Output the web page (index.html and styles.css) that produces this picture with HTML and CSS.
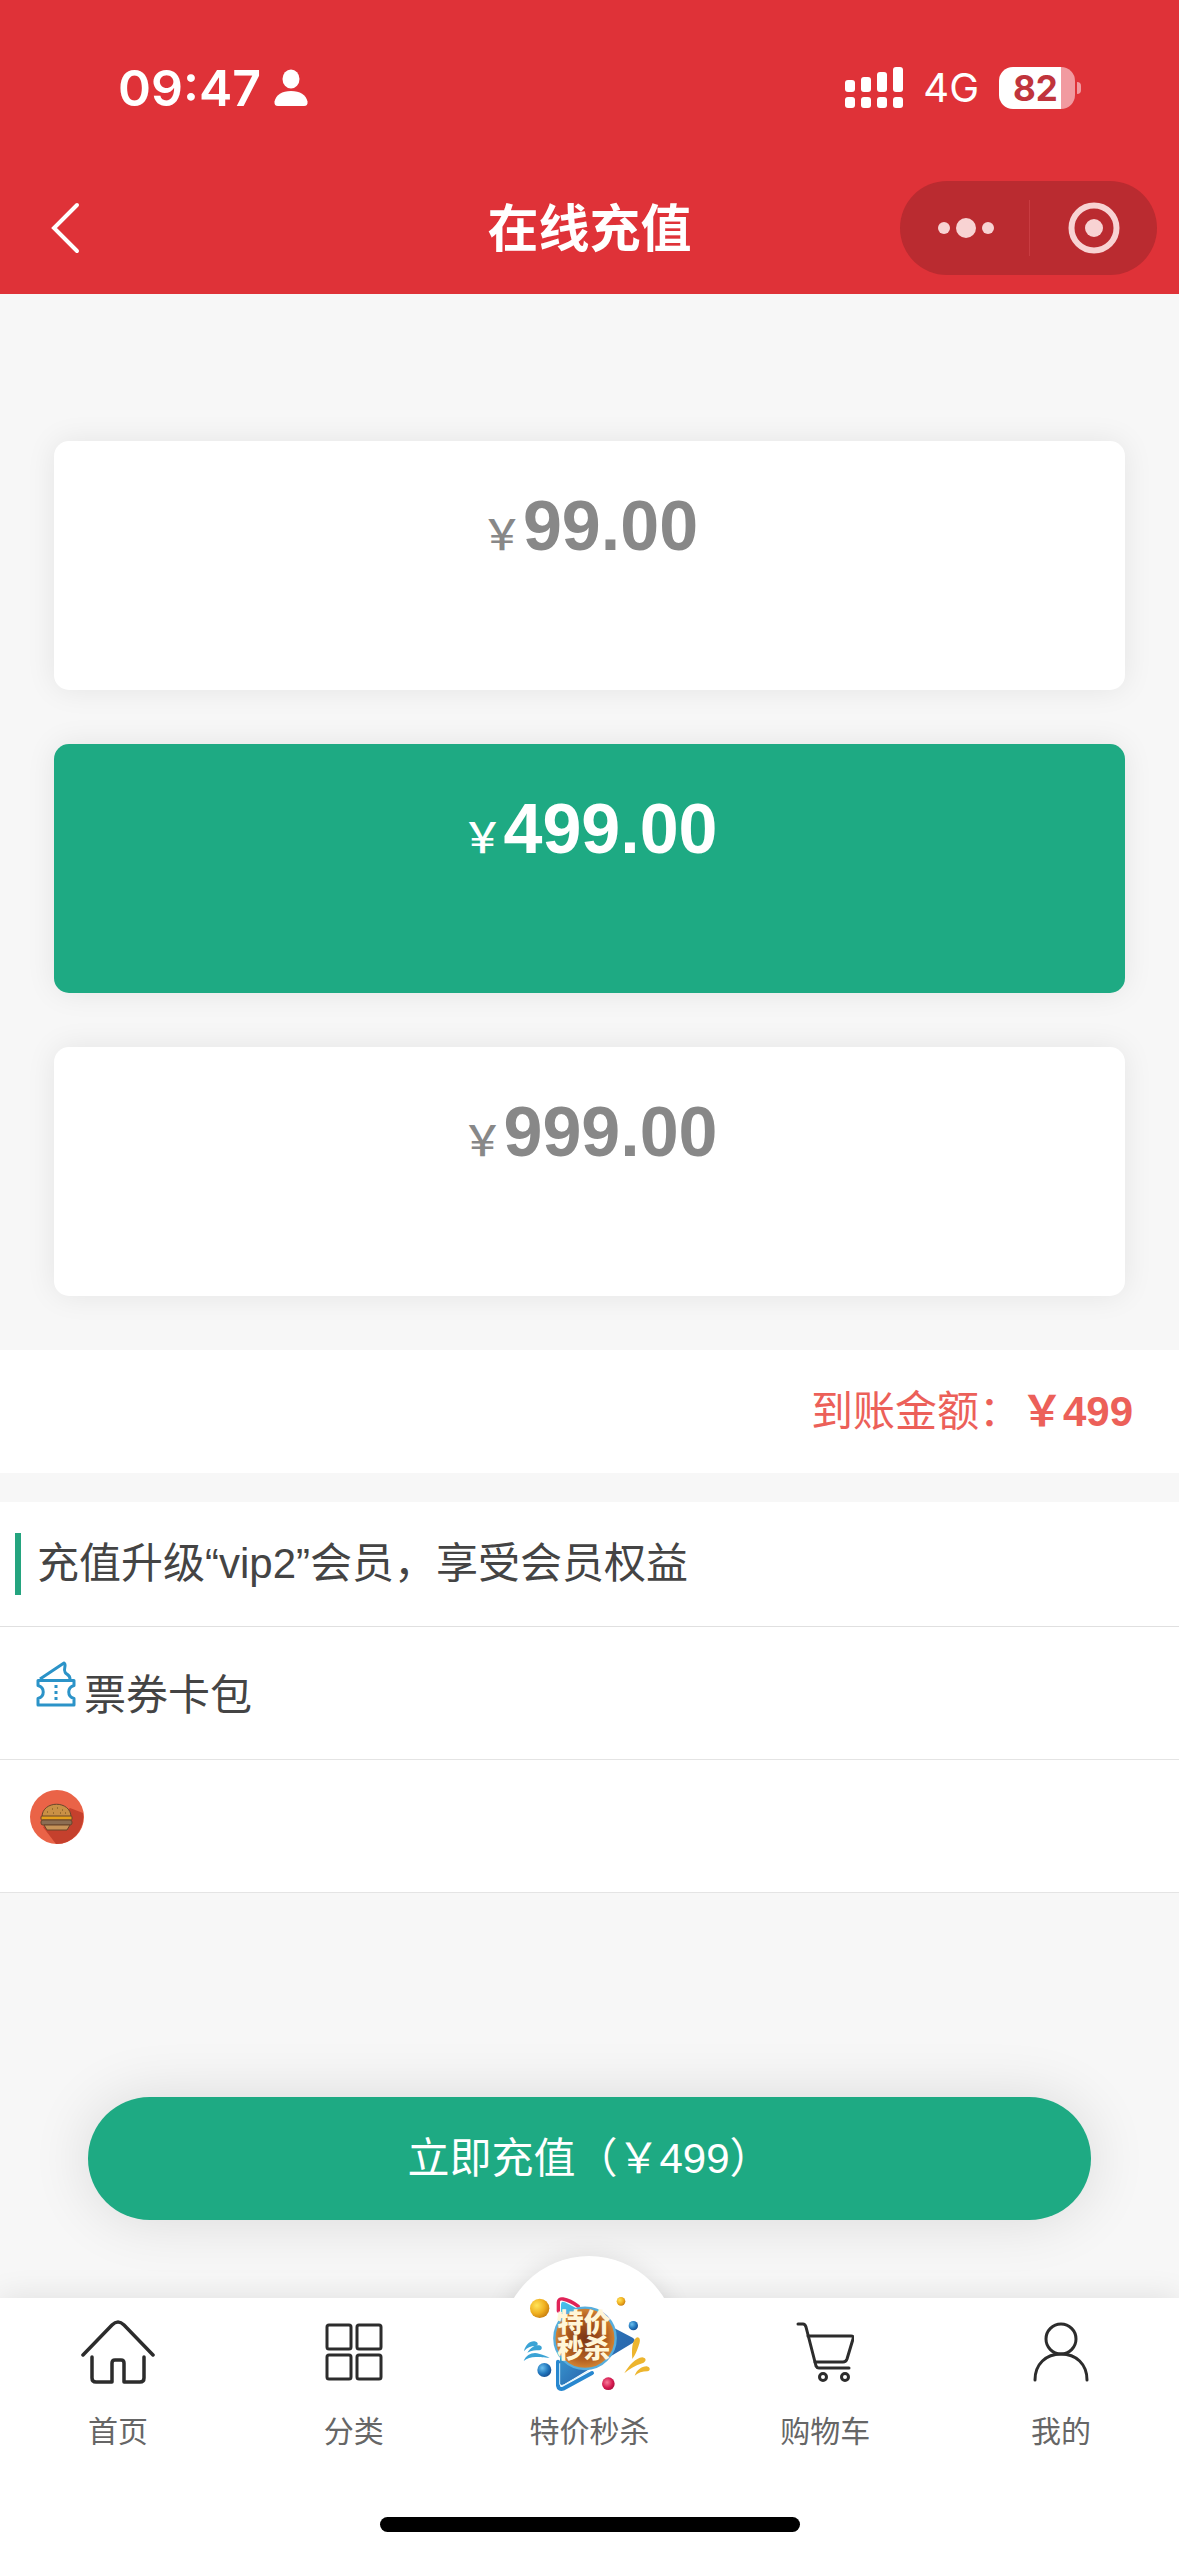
FILE: index.html
```html
<!DOCTYPE html>
<html lang="zh-CN">
<head>
<meta charset="utf-8">
<meta name="viewport" content="width=device-width, initial-scale=1">
<title>在线充值</title>
<link rel="stylesheet" href="styles.css">
</head>
<body>
<header class="header">
  <div class="status">
    <div class="status-side">
      <span class="time">09:47</span>
      <svg width="34" height="38" viewBox="0 0 34 38" fill="#fff"><ellipse cx="17" cy="10" rx="8.5" ry="9.5"/><path d="M4 37Q0 37 .5 32.500C2 26 8 22 17 22s15 4 16.500 10.500Q34 37 30 37z"/></svg>
    </div>
    <div class="status-side status-right">
      <svg width="58" height="42" viewBox="0 0 58 42" fill="#fff"><rect y="13" width="10" height="12" rx="3"/><rect x="16" y="10" width="10" height="15" rx="3"/><rect x="32" y="5" width="10" height="20" rx="3"/><rect x="48" width="10" height="25" rx="3"/><rect y="30" width="10" height="11" rx="3"/><rect x="16" y="30" width="10" height="11" rx="3"/><rect x="32" y="30" width="10" height="11" rx="3"/><rect x="48" y="30" width="10" height="11" rx="3"/></svg>
      <span class="network">4G</span>
      <span class="battery"><span class="battery-level">82</span></span>
    </div>
  </div>
  <div class="nav">
    <button class="back" type="button" aria-label="返回"><svg width="30" height="52" viewBox="0 0 30 52" fill="none" stroke="#fff" stroke-width="4" stroke-linecap="round"><path d="M27 3L4 26l23 23"/></svg></button>
    <h1 class="title">在线充值</h1>
    <div class="capsule">
      <button class="capsule-btn" type="button" aria-label="更多"><svg width="58" height="22" viewBox="0 0 58 22" fill="#f8d3d3"><circle cx="7" cy="11" r="6"/><circle cx="29" cy="11" r="10"/><circle cx="51" cy="11" r="6"/></svg></button>
      <button class="capsule-btn" type="button" aria-label="关闭"><svg width="54" height="54" viewBox="0 0 54 54"><circle cx="27" cy="27" r="22.500" fill="none" stroke="#f8d3d3" stroke-width="6"/><circle cx="27" cy="27" r="9" fill="#f8d3d3"/></svg></button>
    </div>
  </div>
</header>

<main class="main">
  <div class="plans" role="radiogroup" aria-label="充值金额">
    <label class="plan"><input type="radio" name="plan" value="99"><span class="plan-yen">￥</span><span class="plan-price">99.00</span></label>
    <label class="plan"><input type="radio" name="plan" value="499" checked><span class="plan-yen">￥</span><span class="plan-price">499.00</span></label>
    <label class="plan"><input type="radio" name="plan" value="999"><span class="plan-yen">￥</span><span class="plan-price">999.00</span></label>
  </div>

  <p class="amount">到账金额：<strong>￥499</strong></p>

  <section class="benefits">
    <h2 class="benefits-title">充值升级“vip2”会员，享受会员权益</h2>
    <div class="benefit">
      <svg class="ticket" width="40" height="48" viewBox="0 0 40 48" fill="none" stroke="#2b93c8" stroke-width="3" stroke-linejoin="round"><path d="M2 20.500h36v5c-7 2-7 11 0 13v6.500H2v-6.500c7-2 7-11 0-13z"/><path d="M4 19L28 3c3 2-1 6 1 9 1 3 5 2 5 7"/><path d="M20 25v17" stroke-dasharray="3 3"/></svg>
      <span>票券卡包</span>
    </div>
    <div class="benefit">
      <svg class="burger" width="54" height="54" viewBox="0 0 54 54"><circle cx="27" cy="27" r="27" fill="#ea6347"/><path d="M40 18l13 5a27 27 0 0 1-27 31L13 37z" fill="#c5402d"/><g stroke="#68452b" stroke-width="1"><path d="M12 27c0-17 29-17 29 0z" fill="#c99045"/><rect x="11" y="26" width="31" height="4" rx="1" fill="#e3a01c"/><rect x="11" y="30" width="31" height="5" rx="2" fill="#8b6d53"/><path d="M14 35h26l-3 5H17z" fill="#c69358"/></g><path d="M17 22h1m4-3h1m4-1h1m4 2h1m-10 3h1m6 0h1m4 0h1" stroke="#8b6129" stroke-width="1.500"/></svg>
    </div>
  </section>

  <button class="submit" type="button">立即充值（￥499）</button>
</main>

<footer class="footer">
  <nav class="tabs">
    <a class="tab" href="#home"><span class="tab-icon"><svg width="74" height="66" viewBox="0 0 74 66" fill="none" stroke="#2c2c2c" stroke-width="3.500" stroke-linecap="round" stroke-linejoin="round"><path d="M2 36L31 6q6-6 12 0l29 30"/><path d="M11 38v21q0 4 4 4h16V44q0-3 3-3h6q3 0 3 3v19h16q4 0 4-4V38"/></svg></span>首页</a>
    <a class="tab" href="#category"><span class="tab-icon"><svg width="58" height="58" viewBox="0 0 58 58" fill="none" stroke="#2c2c2c" stroke-width="3"><rect x="2" y="2" width="24" height="24" rx="2"/><rect x="32" y="2" width="24" height="24" rx="2"/><rect x="2" y="32" width="24" height="24" rx="2"/><rect x="32" y="32" width="24" height="24" rx="2"/></svg></span>分类</a>
    <a class="tab tab-deal" href="#deals"><span class="tab-icon">
      <svg width="140" height="100" viewBox="120 165 420 300">
        <defs>
          <radialGradient id="gold" cx=".35" cy=".35" r=".7"><stop offset="0" stop-color="#ffe45a"/><stop offset=".6" stop-color="#f0b020"/><stop offset="1" stop-color="#c97f10"/></radialGradient>
          <radialGradient id="blue" cx=".35" cy=".35" r=".7"><stop offset="0" stop-color="#6cc0ee"/><stop offset=".6" stop-color="#2277bd"/><stop offset="1" stop-color="#164f93"/></radialGradient>
          <radialGradient id="pink" cx=".4" cy=".4" r=".7"><stop offset="0" stop-color="#f77a99"/><stop offset=".6" stop-color="#d61b50"/><stop offset="1" stop-color="#a30d3a"/></radialGradient>
          <linearGradient id="play" x1="0" y1="0" x2="1" y2="1"><stop offset="0" stop-color="#49c4ef"/><stop offset=".6" stop-color="#2b6fb4"/><stop offset="1" stop-color="#2a5ea3"/></linearGradient>
          <radialGradient id="wood"><stop offset="0" stop-color="#7b3517"/><stop offset=".7" stop-color="#b35f20"/><stop offset="1" stop-color="#d58835"/></radialGradient>
        </defs>
        <path d="M246 196q0-12 12-6l203 106q12 8 0 16L256 436q-14 6-14-8z" fill="url(#play)"/>
        <path d="M238 216v-26q0-12 14-10 22 4 46 22" fill="none" stroke="#e02458" stroke-width="10" stroke-linecap="round"/>
        <path d="M237 368v72q2 14 18 8l84-46" fill="none" stroke="#2787cf" stroke-width="12" stroke-linecap="round" stroke-linejoin="round"/>
        <path d="M242 374v62q2 6 10 3l76-42" fill="none" stroke="#d9f2fc" stroke-width="3" stroke-linecap="round"/>
        <circle cx="318" cy="298" r="92" fill="url(#wood)" stroke="#57aedd" stroke-width="7"/>
        <g class="deal-logo-text"><text x="234" y="280">特价</text><text x="234" y="356">秒杀</text></g>
        <circle cx="182" cy="208" r="29" fill="url(#gold)"/><circle cx="426" cy="187" r="13" fill="url(#gold)"/>
        <circle cx="463" cy="260" r="14" fill="url(#blue)"/><circle cx="196" cy="393" r="21" fill="url(#blue)"/>
        <circle cx="388" cy="434" r="19" fill="url(#pink)"/>
        <g fill="#3ba3d5"><path d="M135 337c4-20 18-32 32-30 12 2 12 14 2 14-14 0-24 4-34 16z"/><path d="M145 341c10-16 24-24 36-22 10 2 10 14 0 15-12 0-22 0-36 7z"/><path d="M134 366c8-20 28-28 46-22 14 4 24 8 32 12-20 0-26-2-42-2-14 0-26 4-36 12z"/></g>
        <g fill="#edb52e"><path d="M460 360c-2-26-2-56 14-65 12 0 10 14 4 28-6 16-10 26-18 37z"/><path d="M436 403c14-24 34-46 54-48 14 2 12 14 0 18-20 6-40 18-54 30z"/><path d="M467 410c6-16 20-28 36-28 12 2 12 14 2 15-14 0-28 4-38 13z"/></g>
      </svg></span>特价秒杀</a>
    <a class="tab" href="#cart"><span class="tab-icon"><svg width="58" height="60" viewBox="0 0 58 60" fill="none" stroke="#2c2c2c" stroke-width="3" stroke-linecap="round" stroke-linejoin="round"><path d="M2 2h5q2 0 3 3l10 39q1 2 3 2h30"/><path d="M12 14h43q3 0 2 3l-6 20q-1 3-4 3H19"/><circle cx="27" cy="55" r="3.500"/><circle cx="49" cy="55" r="3.500"/></svg></span>购物车</a>
    <a class="tab" href="#mine"><span class="tab-icon"><svg width="56" height="60" viewBox="0 0 56 60" fill="none" stroke="#2c2c2c" stroke-width="3" stroke-linecap="round"><circle cx="28" cy="17" r="15"/><path d="M2 58C2 42 13 32 28 32s26 10 26 26"/></svg></span>我的</a>
  </nav>
  <div class="home-indicator"></div>
</footer>
</body>
</html>
```

FILE: styles.css
```css
* {
  box-sizing: border-box;
}

body {
  margin: 0;
  min-height: 100vh;
  display: flex;
  flex-direction: column;
  background: #f7f7f7;
  color: #444;
  font-family: "Liberation Sans", "Noto Sans CJK SC", sans-serif;
  font-size: 42px;
  line-height: 62px;
}

svg {
  display: block;
}

button {
  padding: 0;
  border: 0;
  background: none;
  color: inherit;
  font: inherit;
}

.header {
  background: #df3238;
  color: #fff;
}

.status {
  display: flex;
  align-items: center;
  justify-content: space-between;
  height: 162px;
  padding: 14px 104px 0 118px;
  font-family: Inter, sans-serif;
}

.status-side {
  display: flex;
  align-items: center;
  gap: 13px;
}

.status-right {
  gap: 20px;
}

.time {
  font-size: 50px;
  font-weight: 600;
}

.network {
  font-size: 40px;
}

.battery {
  position: relative;
  width: 76px;
  height: 42px;
  border-radius: 14px;
  background: linear-gradient(to right, #fff 62px, #f19aa0 62px);
}

.battery::after {
  content: "";
  position: absolute;
  top: 15px;
  right: -6px;
  width: 4px;
  height: 12px;
  border-radius: 0 4px 4px 0;
  background: #f19aa0;
}

.battery-level {
  display: block;
  padding-left: 14px;
  color: #c0343c;
  font-size: 35px;
  font-weight: 700;
  line-height: 42px;
}

.nav {
  display: grid;
  grid-template-columns: 1fr auto 1fr;
  align-items: center;
  height: 132px;
  padding: 0 22px 0 50px;
}

.back {
  justify-self: start;
}

.title {
  margin: 0;
  padding: 4px 28px 0 0;
  font-size: 51px;
  font-weight: 700;
}

.capsule {
  display: flex;
  justify-self: end;
  align-items: center;
  width: 257px;
  height: 94px;
  padding-left: 2px;
  border-radius: 47px;
  background: #ba2b30;
}

.capsule-btn {
  display: flex;
  flex: 1;
  align-items: center;
  justify-content: center;
  height: 56px;
}

.capsule-btn + .capsule-btn {
  border-left: 1px solid #c93c41;
}

.main {
  display: flex;
  flex: 1;
  flex-direction: column;
}

.plans {
  display: grid;
  gap: 54px;
  padding: 147px 54px 54px;
}

.plan {
  display: flex;
  align-items: baseline;
  justify-content: center;
  height: 249px;
  padding-top: 45px;
  border-radius: 15px;
  background: #fff;
  box-shadow: 0 0 30px rgba(0, 0, 0, 0.08);
  color: #888;
  font-weight: 700;
  line-height: 80px;
}

.plan input {
  position: absolute;
  margin: 0;
  appearance: none;
}

.plan:has(input:checked) {
  background: #1eaa83;
  color: #fff;
}

.plan-yen {
  font-family: "Noto Sans CJK SC", sans-serif;
  font-weight: 500;
}

.plan-price {
  font-size: 70px;
}

.amount {
  margin: 0 0 29px;
  padding: 31px 46px 30px;
  background: #fff;
  color: #ec6059;
  text-align: right;
}

.benefits-title {
  margin: 0;
  padding: 31px 15px;
  border-bottom: 1px solid #e0e0e0;
  background: #fff;
  font-size: 42px;
  font-weight: 400;
}

.benefits-title::before {
  content: "";
  float: left;
  width: 6px;
  height: 62px;
  margin-right: 16px;
  background: #24a47f;
}

.benefit {
  display: flex;
  gap: 8px;
  align-items: flex-start;
  min-height: 133px;
  padding: 30px;
  border-bottom: 1px solid #e4e4e4;
  background: #fff;
}

.benefit span {
  padding-top: 8px;
}

.ticket {
  margin: 3px 0 0 6px;
}

.submit {
  height: 123px;
  margin: 204px 88px 78px;
  border-radius: 62px;
  background: #1eaa83;
  box-shadow: 0 0 60px rgba(0, 0, 0, 0.12);
  color: #fff;
}

.footer {
  display: flex;
  flex-direction: column;
  gap: 65px;
  padding-bottom: 24px;
  background: #fff;
  box-shadow: 0 0 30px rgba(0, 0, 0, 0.1);
}

.tabs {
  display: grid;
  grid-template-columns: repeat(5, 1fr);
}

.tab {
  position: relative;
  display: flex;
  flex-direction: column;
  align-items: center;
  gap: 22px;
  color: #666;
  font-size: 30px;
  line-height: 40px;
  text-decoration: none;
}

.tab-icon {
  position: relative;
  display: grid;
  align-content: center;
  justify-content: center;
  height: 92px;
  padding-top: 16px;
}

.tab-deal .tab-icon {
  padding-top: 0;
}

/* White disc rising above the bar behind the deal logo. */
.tab-deal::before {
  content: "";
  position: absolute;
  top: -42px;
  width: 176px;
  height: 176px;
  border-radius: 50%;
  background: #fff;
  box-shadow: 0 0 24px rgba(0, 0, 0, 0.1);
  clip-path: inset(-30px -30px 134px);
}

.deal-logo-text {
  fill: #fff6d8;
  font-size: 80px;
  font-weight: 900;
}

.home-indicator {
  align-self: center;
  width: 420px;
  height: 15px;
  border-radius: 8px;
  background: #000;
}
```
